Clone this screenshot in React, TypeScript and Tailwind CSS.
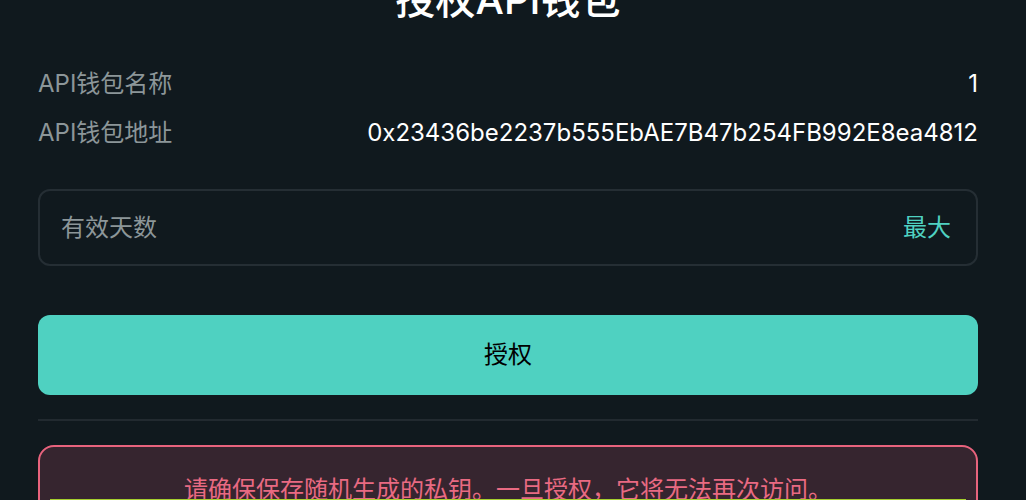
export default function App() {
  return (
    <div
      className="min-h-screen bg-[#10191e] text-white overflow-hidden"
      style={{ fontFamily: 'Inter, "Noto Sans CJK SC", sans-serif' }}
    >
      <div className="ml-[38px] w-[940px] flex flex-col">
        {/* Title */}
        <h1 className="mt-[-20px] h-[40px] text-[40px] leading-[40px] font-medium text-center">
          授权API钱包
        </h1>

        {/* Info rows */}
        <div className="mt-[48px] flex flex-col gap-[17px] text-[24px] leading-[32px]">
          <div className="flex justify-between items-center">
            <span className="text-[#8c9699]">API钱包名称</span>
            <span>1</span>
          </div>
          <div className="flex justify-between items-center">
            <span className="text-[#8c9699]">API钱包地址</span>
            <span>0x23436be2237b555EbAE7B47b254FB992E8ea4812</span>
          </div>
        </div>

        {/* Days input */}
        <div className="mt-[40px] h-[77px] rounded-[12px] border-2 border-[#252e34] flex items-center justify-between pl-[21px] pr-[25px] text-[24px]">
          <input
            className="bg-transparent outline-none flex-1 placeholder:text-[#8c9699] text-white"
            placeholder="有效天数"
          />
          <button className="text-[#4fd1c1]">最大</button>
        </div>

        {/* Authorize button */}
        <button className="mt-[49px] h-[80px] rounded-[12px] bg-[#4fd1c1] text-black text-[24px]">
          授权
        </button>

        <div className="mt-[24px] h-[2px] bg-[#222a30]" />

        {/* Warning */}
        <div className="mt-[24px] rounded-[16px] border-2 border-[#e8637d] bg-[#36252f] pt-[31px]">
          <p className="text-center text-[#e96a82] text-[24px] leading-[24px]">
            请确保保存随机生成的私钥。一旦授权，它将无法再次访问。
          </p>
          <div className="relative mx-[10px] mt-[-3px] border-t-2 border-[#a6cf2f] h-[40px]" />
        </div>
      </div>
    </div>
  )
}
